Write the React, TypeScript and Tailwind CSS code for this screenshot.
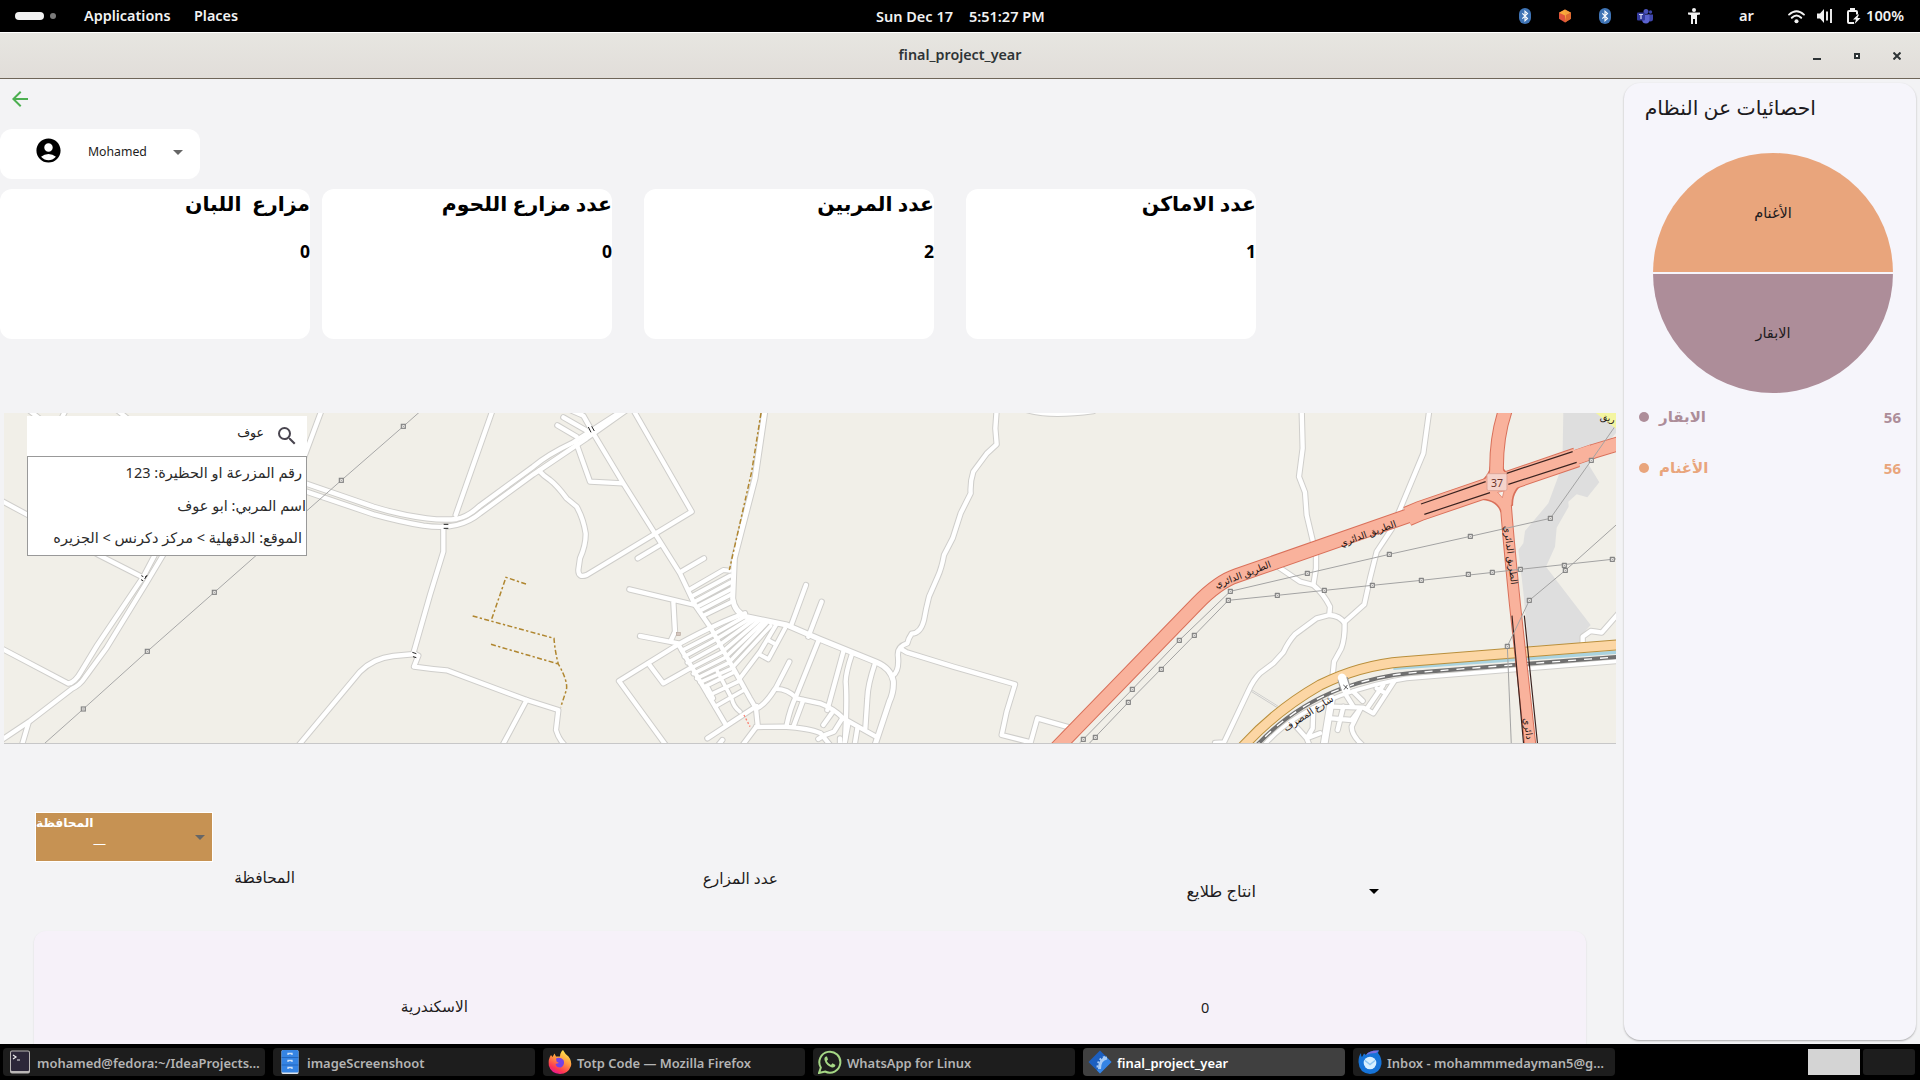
import React from "react";
import { MdAccountCircle, MdSearch, MdArrowBack, MdArrowDropDown } from "react-icons/md";

const UI = "font-['Noto_Sans','DejaVu_Sans',sans-serif]";

/* ---------- map data: every path is in thirds of a pixel, shifted by its tile's x ---------- */
type Road = { x: number; d: string; w?: number };

const roads: Road[] = [
  { x: 0, d: "M0 285L80 328L300 452L430 518" },
  { x: 0, d: "M480 420L430 515L292 720L242 802Q225 832 205 836L0 728" },
  { x: 0, d: "M510 415L440 532L320 728L255 817Q240 840 215 852L90 948L0 1008" },
  { x: 0, d: "M85 955L66 1020" },
  { x: 0, d: "M80 10L130 50M197 15L180 50M345 10L400 55" },
  { x: 0, d: "M965 15L900 190" },
  { x: 0, d: "M890 226L1120 305Q1200 330 1280 340Q1330 346 1370 342Q1405 335 1440 302L1600 185Q1640 150 1720 112L1870 15" },
  { x: 0, d: "M890 250L1120 328Q1200 350 1270 362Q1330 370 1370 360Q1410 350 1440 325L1600 208L1760 100L1880 15" },
  { x: 0, d: "M895 1022L1080 800Q1120 760 1180 753L1245 747" },
  { x: 400, d: "M130 365L130 440L90 570L40 745L55 752L42 785Q90 792 140 796L380 885L475 915L468 975Q475 1000 492 1018" },
  { x: 400, d: "M278 15L167 330" },
  { x: 400, d: "M308 1020L380 885" },
  { x: 400, d: "M700 15L875 320L560 510Q535 520 535 495L540 460Q558 420 557 385Q550 340 530 305L500 280Q470 240 450 225Q430 212 417 197" },
  { x: 400, d: "M515 17L550 32L580 85L670 235L840 505L885 600L930 665L1000 790L1050 880L1068 910L1073 960L1028 1020" },
  { x: 400, d: "M490 37L560 77M472 61L530 95" },
  { x: 400, d: "M530 118L570 230L668 235" },
  { x: 400, d: "M713 460L780 420M840 502L912 460" },
  { x: 400, d: "M1095 15L1065 220L1003 460L998 580Q1003 622 1040 635L1160 660L1260 703L1430 772Q1472 790 1480 828Q1482 860 1468 890L1425 1020", w: 15 },
  { x: 400, d: "M688 553L885 600M820 590L825 680L812 708M720 693L835 715" },
  { x: 400, d: "M1035 625Q960 650 835 718L657 828L797 1020" },
  { x: 400, d: "M745 775L790 835L870 790M835 718L975 955M1070 903L922 1000" },
  { x: 400, d: "M865 556L970 495L990 497M873 575L990 512M881 592L992 532M890 606L994 552M898 618L995 568M908 633L1000 588", w: 12 },
  { x: 400, d: "M845 737L940 688L1035 634M853 755L945 705L1050 640M862 773L955 722L1062 644M870 791L965 742L1075 648M880 806L975 758L1088 652M890 820L985 774L1098 656M900 832L995 790L1112 662", w: 11 },
  { x: 400, d: "M912 846L1005 800M925 872L1018 828M945 905L1032 855M950 795L995 880Q1000 905 1020 920M925 850L940 880", w: 11 },
  { x: 400, d: "M1018 822L1080 740L1128 660M1078 748L1105 763L1155 670M1102 704L1124 716", w: 12 },
  { x: 400, d: "M1218 540L1172 665M1265 590L1225 695M1255 708L1190 870Q1170 910 1160 960" },
  { x: 400, d: "M1168 770L1127 850M1070 910Q1095 900 1125 852Q1160 850 1190 880L1260 895Q1300 910 1330 940L1428 995" },
  { x: 400, d: "M1210 885L1180 965M1068 966L1150 965Q1230 970 1262 985L1290 1020M967 1005L955 1020" },
  { x: 800, d: "M130 740L82 915M155 750Q138 800 137 830Q142 890 134 1020M225 775Q203 840 202 880L196 970M95 925L70 960" },
  { x: 800, d: "M125 943L102 980Q75 988 55 1002M145 955L133 1020M172 970L164 1020M120 1000L120 1020" },
  { x: 800, d: "M590 15L586 70L590 118L560 146L520 200Q510 230 512 265L482 325L458 400L432 450Q425 490 412 518L387 575Q378 610 372 645Q362 685 335 686Q325 700 322 715Q290 725 294 755Q298 800 278 812" },
  { x: 800, d: "M305 733L320 742L460 785L645 838L620 920L605 990L692 1012L712 940L810 968" },
  { x: 800, d: "M680 15Q750 36 880 18" },
  { x: 1200, d: "M305 15L308 130L297 215L315 262L320 330L340 415M348 445L348 490L340 540" },
  { x: 1200, d: "M688 15L670 145L595 325M575 372L530 440L510 520L493 598L435 650" },
  { x: 1200, d: "M238 488L300 530L340 540Q370 565 390 605L388 630L350 640L285 688Q265 710 250 742L220 775L180 805Q160 825 145 858L72 1012L45 1014" },
  { x: 1200, d: "M388 630Q420 632 434 655Q435 700 424 730L402 770L398 810" },
  { x: 1200, d: "M1260 620L1205 683Q1190 680 1172 678L1148 695L1148 718" },
  { x: 1200, d: "M180 1035Q260 935 420 872Q520 835 620 820L1260 768", w: 11 },
  { x: 1200, d: "M395 880L372 1020", w: 20 },
  { x: 1200, d: "M583 828L520 925L490 908L400 905M550 840L500 912M530 850L552 862" },
  { x: 1200, d: "M435 865L460 905M460 860L488 888M482 910L455 965Q455 990 485 1018M395 940L455 945L480 912M413 975L430 905" },
  { x: 1200, d: "M340 910L338 970L320 1000L328 1020M275 950L320 1000L360 985" },
];

const pylonsA = [[250, 912], [442, 739], [643, 562], [1024, 226], [1210, 64]];
const pylonsD = [
  [91, 559], [322, 505], [568, 448], [811, 394], [1051, 340], [1174, 166], [-62, 706], [-203, 853], [-350, 1003],
  [85, 586], [232, 571], [373, 556], [517, 541], [664, 526], [805, 508], [877, 502], [961, 493], [1093, 481], [1237, 463],
  [-17, 691], [-116, 793], [-215, 892], [-314, 997], [1096, 496], [988, 586], [922, 724],
];

const tile = (x: number) => `translate(${x} 405) scale(0.33333)`;

function Pylon({ x, y }: { x: number; y: number }) {
  return (
    <g>
      <rect x={x - 6} y={y - 6} width="12" height="12" fill="#f4f2ee" stroke="#858585" strokeWidth="3.5" />
      <path d={`M${x - 3} ${y - 3}l6 6m0-6l-6 6`} stroke="#999" strokeWidth="2" />
    </g>
  );
}

function MapDrawing() {
  const ring = "M-440 1040L-10 597Q55 530 110 512L660 320";
  const ringWide = "M622 334L660 318L1130 157";
  const ringEnd = "M1100 167L1180 139L1270 112";
  const north = "M918 10Q886 100 890 215";
  const south = "M914 250Q920 350 945 600L992 1030";
  const orange = "M115 1040Q220 920 360 840Q480 780 610 770L1260 719";
  const rail = "M162 1030Q270 910 420 852Q530 812 640 803L1260 755";
  return (
    <svg className="block h-[330px] w-[1612px]" viewBox="4 413 1612 330">
      <rect x="0" y="400" width="1630" height="360" fill="#f1efe8" />
      <g transform={tile(1200)}>
        <path
          fill="#dedede"
          d="M1090 20H1260V70L1165 178L1198 232L1162 277L1130 268L1105 290L1106 305L1070 368L1065 425L1038 485L1172 660L1145 690V715L985 724L970 560L955 435L970 415L975 378L1045 295L1080 200L1088 140Z"
        />
        <path d="M155 857L232 905" stroke="#c9c9c9" strokeWidth="7" />
        <path d="M155 857L232 905" stroke="#f1efe8" strokeWidth="3" />
      </g>
      <g fill="none" strokeLinecap="round" strokeLinejoin="round">
        {roads.map((r, i) => (
          <path key={i} transform={tile(r.x)} d={r.d} stroke="#cfcecb" strokeWidth={(r.w ?? 13) + 6} />
        ))}
        {roads.map((r, i) => (
          <path key={i} transform={tile(r.x)} d={r.d} stroke="#fff" strokeWidth={r.w ?? 13} />
        ))}
      </g>
      <g transform={tile(400)} fill="none">
        <path
          d="M1083 24L1055 200L988 495M378 537L318 517L273 648M218 633L462 700Q465 740 475 777Q505 830 499 855L482 907M273 718L475 777"
          stroke="#b0862f"
          strokeWidth="4.5"
          strokeDasharray="15 7 7 7"
        />
        <path d="M1032 930L1050 965" stroke="#fa8072" strokeWidth="4" strokeDasharray="6 6" />
        <rect x="829" y="682" width="12" height="10" fill="#d4c6bf" stroke="#b9a99e" strokeWidth="2" />
        <path d="M565 66l8 16m2-18l8 14M131 358h14m-14 12h14M37 742l12 4m-10 9l10 3" stroke="#222" strokeWidth="3" />
      </g>
      <g transform={tile(0)} fill="none">
        <path d="M424 512l6 3M436 515l6-3M423 524l6 3M434 522l6-10" stroke="#222" strokeWidth="3" />
        <path d="M125 1023L250 912L442 739L643 562L1024 226L1210 64L1262 18" stroke="#a8a8a8" strokeWidth="3" />
        {pylonsA.map(([x, y]) => (
          <Pylon key={x} x={x} y={y} />
        ))}
      </g>
      <g transform={tile(1200)} fill="none" strokeLinejoin="round">
        <path d="M580 790L1260 741" stroke="#aad3df" strokeWidth="10" />
        <path d={rail} stroke="#707070" strokeWidth="12" />
        <path d={rail} stroke="#fff" strokeWidth="4" strokeDasharray="24 24" />
        <path d={orange} stroke="#b98f3c" strokeWidth="33" />
        <path d={orange} stroke="#fcd6a4" strokeWidth="27" />
        <path d="M428 820L436 850" stroke="#999" strokeWidth="32" />
        <path d="M426 818L438 854" stroke="#fff" strokeWidth="25" strokeLinecap="round" />
        <path d="M430 840l14 12m-2-12l-10 14" stroke="#444" strokeWidth="2.5" />

        <g stroke="#d9705a">
          <path d={ring} strokeWidth="45" />
          <path d={ringWide} strokeWidth="61" />
          <path d={ringEnd} strokeWidth="45" />
          <path d={north} strokeWidth="44" />
          <path d={south} strokeWidth="36" />
          <path d="M850 225Q870 205 872 185H908Q908 198 928 207L985 225Q935 250 937 300L903 320Q890 282 835 282Z" fill="#f9b29c" strokeWidth="5" />
        </g>
        <g stroke="#f9b29c">
          <path d={ring} strokeWidth="39" />
          <path d={ringWide} strokeWidth="55" />
          <path d={ringEnd} strokeWidth="39" />
          <path d="M1090 147L1170 120V164L1102 188Z" fill="#f9b29c" stroke="none" />
          <path d={north} strokeWidth="38" />
          <path d={south} strokeWidth="30" />
        </g>
        <path d="M893 262L912 258L907 278Z" fill="#f6f1ea" stroke="#d9705a" strokeWidth="2" />
        <path d="M663 297L857 230M673 328L870 263M920 205L1118 140M925 238L1130 172M936 632L972 1030M973 632L1014 1030" stroke="#3a2320" strokeWidth="3.5" />

        <path
          d="M-360 1013L-203 853L-62 706L91 559L322 505L568 448L811 394L1051 340L1174 166L1255 50M-335 1018L-215 892L-17 691L85 586L232 571L517 541L664 526L961 493L1255 461M1255 354L1096 496L988 586L922 724L934 1020"
          stroke="#a3a3a3"
          strokeWidth="3"
        />
        {pylonsD.map(([x, y]) => (
          <Pylon key={`${x}.${y}`} x={x} y={y} />
        ))}
        <rect x="861" y="206" width="60" height="51" rx="5" fill="#f5d3cb" stroke="#dfa597" strokeWidth="3" />
      </g>
      <path d="M1598 411L1616 425L1616 411Z" fill="#f4f5a0" stroke="#f4f5a0" strokeWidth="6" />
      <g className={UI} fill="#1c1412" textAnchor="middle" fontSize="9.400">
        <text x="1497" y="486.500" fontSize="10.500" fill="#6b352c">37</text>
        <text transform="translate(1244 577.500) rotate(-21)">الطريق الدائري</text>
        <text transform="translate(1369 536.500) rotate(-20)">الطريق الدائري</text>
        <text transform="translate(1507.500 555.500) rotate(83)">الطريق الدائري</text>
        <text transform="translate(1525 729) rotate(82)">دائري</text>
        <text transform="translate(1310 716) rotate(-33)">شارع المصرف</text>
        <text transform="translate(1607 421) rotate(14)">ريق</text>
      </g>
    </svg>
  );
}

/* ---------- system icons ---------- */
function BluetoothIcon() {
  return (
    <svg className="h-4 w-3" viewBox="0 0 12 16">
      <rect width="12" height="16" rx="6" fill="#3f74b5" />
      <path d="M3.300 5.300L8.500 10.500L6 12.800V3.200L8.500 5.500L3.300 10.700" fill="none" stroke="#fff" strokeWidth="1.100" />
    </svg>
  );
}

function TopBar() {
  return (
    <header className="relative flex h-8 shrink-0 items-center bg-black text-[14.67px] font-semibold text-[#f2f2f2]">
      <span className="ml-[15px] h-2 w-[29px] rounded-full bg-[#f2f2f2]" />
      <span className="ml-[6px] size-[6px] rounded-full bg-[#7b7b7b]" />
      <span className="mb-px ml-7 w-[110px] text-[14.400px] leading-[23px]">Applications</span>
      <span className="mb-px text-[14.400px] leading-[23px]">Places</span>
      <div className="absolute top-[5px] left-[876px] flex gap-4 text-[14.500px] leading-[22px] whitespace-nowrap">
        <span>Sun Dec 17</span>
        <span>5:51:27 PM</span>
      </div>
      <div className="ml-auto flex items-center">
        <BluetoothIcon />
        <svg className="ml-[28px] h-4 w-3" viewBox="0 0 13 16">
          <path d="M6.500 1L13 4.500V11L6.500 15L0 11V4.500Z" fill="#e0533c" />
          <path d="M6.500 1L13 4.500L8 7L6.500 15L6.500 1Z" fill="#f3a13a" />
          <path d="M6.500 1L0 4.500L6.500 7.500Z" fill="#f9a83a" />
          <path d="M13 4.500V11L6.500 15L8 7Z" fill="#dd6a30" />
        </svg>
        <span className="ml-[28px]"><BluetoothIcon /></span>
        <svg className="ml-[26px] h-4 w-4" viewBox="0 0 16 16">
          <circle cx="9" cy="3.500" r="2.500" fill="#4b53bc" />
          <circle cx="13.500" cy="4" r="1.700" fill="#3c43a5" />
          <path d="M11 6.500H16V11Q16 13.500 13 13.500L11 13Z" fill="#3f46ab" />
          <path d="M5 6.500H12.500V11.500Q12.500 15.500 9 15.500Q5.500 15.500 5 12Z" fill="#5b63d0" />
          <rect y="4.500" width="8" height="8" rx="1" fill="#343b9e" />
          <path d="M2 6.500H6M4 6.500V11" stroke="#d5d7f5" strokeWidth="1.200" />
        </svg>
        <svg className="ml-[33px] size-4" viewBox="0 0 16 16" fill="#f2f2f2">
          <circle cx="8" cy="2" r="2" />
          <path d="M2 4.600H14V6.400L11 7V16H9V11H7V16H5V7L2 6.400Z" />
        </svg>
        <span className="mb-px ml-[37px] w-[15px] leading-[23px]">ar</span>
        <svg className="ml-[34px] size-[17px]" viewBox="0 0 16 16" fill="none" stroke="#f2f2f2" strokeWidth="1.800">
          <path d="M1 6.200Q8 -0.300 15 6.200M3.600 9.200Q8 5 12.400 9.200" strokeLinecap="round" />
          <circle cx="8" cy="12.500" r="1.900" fill="#f2f2f2" stroke="none" />
        </svg>
        <svg className="ml-[12px] size-4" viewBox="0 0 16 16" fill="#f2f2f2">
          <path d="M0 5.500H3L7 1V15L3 10.500H0Z" />
          <path d="M10 3.500V12.500M14 1V15" stroke="#f2f2f2" strokeWidth="1.900" />
        </svg>
        <svg className="ml-[13px] h-4 w-4" viewBox="0 0 16 16" fill="none" stroke="#f2f2f2" strokeWidth="2">
          <path d="M8 15H3Q2 15 2 14V4Q2 3 3 3H10Q11 3 11 4V6.500" />
          <rect x="4" y="0" width="5" height="3" fill="#f2f2f2" stroke="none" />
          <path d="M12 6.500L7 11.500H10L8.600 16L14.500 10H11.500L13 6.500Z" fill="#f2f2f2" stroke="none" />
        </svg>
        <span className="mr-[12px] mb-px ml-[4px] w-[42px] leading-[23px]">100%</span>
      </div>
    </header>
  );
}

function TitleBar() {
  return (
    <div className="relative flex h-[47px] shrink-0 items-center justify-center border-t border-b border-t-white border-b-[#6f6559] bg-linear-to-b from-[#e7e6e1] to-[#e1ddd9] text-[14.300px] font-semibold text-[#2e3436]">
      <span className="mb-px leading-[22px]">final_project_year</span>
      <div className="absolute right-[19px] flex items-center">
        <span className="mt-[7px] mr-[33px] h-[2px] w-[8px] bg-[#2e3436]" />
        <span className="mr-[33px] size-[6px] border-2 border-[#2e3436] bg-white" />
        <svg className="size-[8px]" viewBox="0 0 8 8">
          <path d="M0.500 0.500L7.500 7.500M7.500 0.500L0.500 7.500" stroke="#2e3436" strokeWidth="2" />
        </svg>
      </div>
    </div>
  );
}

const stats = [
  { title: "مزارع  اللبان", value: "0", box: "w-[310px] mr-3" },
  { title: "عدد مزارع اللحوم", value: "0", box: "w-[290px] mr-8" },
  { title: "عدد المربين", value: "2", box: "w-[290px] mr-8" },
  { title: "عدد الاماكن", value: "1", box: "w-[290px]" },
];

function Stats() {
  return (
    <div className="mt-[10px] flex">
      {stats.map((s) => (
        <div key={s.title} dir="rtl" className={`h-[150px] rounded-xl bg-white font-bold text-black ${s.box}`}>
          <div className="h-[30px] text-[20.400px] leading-[28px] whitespace-pre">{s.title}</div>
          <div className="mt-[18px] text-[17.500px] leading-7">{s.value}</div>
        </div>
      ))}
    </div>
  );
}

function SearchBox() {
  return (
    <div className="absolute top-[3px] left-[23px] w-[280px] text-[#1d1b20]">
      <div dir="rtl" className="flex h-10 items-start bg-white pr-[8px] text-[12.500px]">
        <MdSearch className="mt-[8px] size-6 text-[#49454f]" />
        <span className="mt-[5px] mr-[11px] leading-6">عوف</span>
      </div>
      <div dir="rtl" className="flex h-[100px] flex-col border border-[#999] bg-white text-[14.500px] text-[#2a2a2a]">
        <div className="h-[32px] pr-1 leading-[31px]">رقم المزرعة او الحظيرة: 123</div>
        <div className="h-[33px] leading-[33px]">اسم المربي: ابو عوف</div>
        <div className="h-[33px] pr-1 leading-[31px]">الموقع: الدقهلية &gt; مركز دكرنس &gt; الجزيره</div>
      </div>
    </div>
  );
}

function SidePanel() {
  return (
    <aside className="mt-1 flex h-[957px] w-[292px] flex-col rounded-2xl bg-[#f6f5fb] shadow-[0_1px_2px_rgba(0,0,0,0.3)]">
      <div dir="rtl" className="mt-[9px] w-[192px] text-[20.400px] leading-[30px] text-[#1d1b20]">احصائيات عن النظام</div>
      <div className="mt-[31px] ml-[29px] flex size-[240px] flex-col overflow-hidden rounded-full text-[14.500px] text-[#1d1b20]">
        <div className="flex h-[119px] items-center justify-center bg-[#e9a57c]">الأغنام</div>
        <div className="h-[2px] bg-[#f6f5fb]" />
        <div className="flex h-[119px] items-center justify-center bg-[#ad8d99] pb-[2px]">الابقار</div>
      </div>
      <div className="mt-[10px] flex h-7 items-center pr-[15px] pl-[15px] text-[15px] font-bold text-[#ad8d99]">
        <span className="mr-[10px] size-[10px] rounded-full bg-[#ad8d99]" />
        <span className="mb-[2px]">الابقار</span>
        <span className="ml-auto">56</span>
      </div>
      <div className="mt-[23px] flex h-7 items-center pr-[15px] pl-[15px] text-[15px] font-bold text-[#e9a57c]">
        <span className="mr-[10px] size-[10px] rounded-full bg-[#e9a57c]" />
        <span className="mb-[2px]">الأغنام</span>
        <span className="ml-auto">56</span>
      </div>
    </aside>
  );
}

function Table() {
  return (
    <>
      <div className="mt-[69px] ml-[35px] flex h-[50px] w-[178px] border border-white bg-[#c69253] font-semibold text-white">
        <div className="flex w-[70px] flex-col">
          <span className="text-[12.200px] leading-5">المحافظة</span>
          <span className="ml-[57px] text-[13px] leading-5 font-normal">—</span>
        </div>
        <MdArrowDropDown className="mt-[12px] ml-auto size-6 text-[#666]" />
      </div>
      <div className="flex h-[69px] text-[15.400px] text-[#1d1b20]">
        <div dir="rtl" className="mt-[4px] w-[295px] leading-6">المحافظة</div>
        <div dir="rtl" className="mt-[5px] w-[483px] leading-6">عدد المزارع</div>
        <div dir="rtl" className="mt-[17px] w-[478px] text-[16.300px] leading-6">انتاج طلايع</div>
        <MdArrowDropDown className="mt-[17px] ml-[106px] size-6 text-black" />
      </div>
      <div className="ml-[34px] flex h-[114px] w-[1552px] rounded-t-xl bg-[#f6f1f9] pt-[64px] text-[15.400px] text-[#1d1b20] shadow-[0_1px_2px_rgba(0,0,0,0.12)]">
        <div dir="rtl" className="w-[434px] leading-6">الاسكندرية</div>
        <div className="ml-[733px] text-[14.500px] leading-6">0</div>
      </div>
    </>
  );
}

/* ---------- taskbar ---------- */
const TerminalIcon = () => (
  <svg className="size-6 shrink-0" viewBox="0 0 24 24">
    <rect x="2" y="0.500" width="20" height="23" rx="2" fill="#b9b6b5" />
    <rect x="3" y="1.500" width="18" height="19.500" rx="1" fill="#2c2739" />
    <path d="M5 5L8 7L5 9M9 10H12" fill="none" stroke="#eee" strokeWidth="1.200" />
  </svg>
);
const FilesIcon = () => (
  <svg className="size-6 shrink-0" viewBox="0 0 24 24">
    <rect x="3.500" y="0" width="17" height="24" rx="1.500" fill="#dfe3e8" />
    <rect x="3.500" y="0" width="17" height="22.500" rx="1.500" fill="#3584e4" />
    <path d="M3.500 7.500H20.500M3.500 15H20.500" stroke="#2467bd" strokeWidth="1" />
    <path d="M10 5V3.500H14V5M10 12V10.500H14V12M10 19V17.500H14V19" fill="none" stroke="#cfe0f5" strokeWidth="1.300" />
  </svg>
);
const FirefoxIcon = () => (
  <svg className="size-6 shrink-0" viewBox="0 0 24 24">
    <defs>
      <linearGradient id="ff" x1="0.800" y1="0" x2="0.300" y2="1">
        <stop offset="0" stopColor="#fff44f" />
        <stop offset="0.450" stopColor="#ff9640" />
        <stop offset="0.800" stopColor="#ff3750" />
        <stop offset="1" stopColor="#e3159b" />
      </linearGradient>
    </defs>
    <path d="M15 0Q17 4 20.500 6.500Q24 11 23 16Q20 24 12 24Q3 23.500 0.800 15.500Q0 9 3 5L4.500 7L6.500 3.500L8 6.500L12 6.500Q12 2.500 15 0Z" fill="url(#ff)" />
    <path d="M8 8.500Q12 6.500 15.500 10Q17.500 15 13 17.500Q8.500 18 7.500 14L11 13L8.500 11.500Z" fill="#7542e5" />
  </svg>
);
const WhatsAppIcon = () => (
  <svg className="size-6 shrink-0" viewBox="0 0 24 24" fill="none">
    <path d="M1 23L2.800 17.500A10.500 10.500 0 1 1 7 21.500Z" stroke="#a5d785" strokeWidth="2" />
    <path d="M8 6.500Q6 7 6.500 10Q8 15.500 14 17.500Q17 17.800 17.500 15L14.500 13.300L13 15Q10 13.800 8.800 11L10 9.500L9 6.500Z" fill="#a5d785" />
  </svg>
);
const AppIcon = () => (
  <svg className="size-6 shrink-0" viewBox="0 0 24 24">
    <path d="M12 0.500L23.500 12L12 23.500L0.500 12Z" fill="#1c5fc0" />
    <path d="M17 5.500L23.500 12L12 23.500L9 20.500Z" fill="#3584e4" />
    <path d="M19 8Q11.500 9 11.500 19" fill="none" stroke="#a6caf5" strokeWidth="3" />
    <path d="M17 7Q9.500 8.500 9.500 18" fill="none" stroke="#a6caf5" strokeWidth="2" strokeDasharray="2 2" />
  </svg>
);
const ThunderbirdIcon = () => (
  <svg className="size-6 shrink-0" viewBox="0 0 24 24">
    <path d="M8 5Q11 0 21 0.500L20 3Q24 8 23.500 14Q22 23.500 12 24Q1 23 0.500 12Q0.500 6 3 3Q3 6 4 7L6 3.500Z" fill="#1673d8" />
    <path d="M8 5Q11 0 21 0.500L18 3Q12 3 8 5Z" fill="#7a6fe0" />
    <circle cx="12" cy="13" r="6.300" fill="#d8efff" />
    <path d="M7 10.500L12 14.500L17 10.500" fill="none" stroke="#8cc6f4" strokeWidth="1.500" />
  </svg>
);

const tasks = [
  { label: "mohamed@fedora:~/IdeaProjects…", Icon: TerminalIcon, active: false },
  { label: "imageScreenshoot", Icon: FilesIcon, active: false },
  { label: "Totp Code — Mozilla Firefox", Icon: FirefoxIcon, active: false },
  { label: "WhatsApp for Linux", Icon: WhatsAppIcon, active: false },
  { label: "final_project_year", Icon: AppIcon, active: true },
  { label: "Inbox - mohammmedayman5@g…", Icon: ThunderbirdIcon, active: false },
];

function Taskbar() {
  return (
    <footer className="flex h-9 shrink-0 items-center gap-2 bg-black pl-[3px]">
      {tasks.map(({ label, Icon, active }) => (
        <div
          key={label}
          className={`flex h-7 w-[262px] items-center rounded-[4px] pl-[5px] text-[12.950px] font-semibold whitespace-nowrap ${
            active ? "bg-[#404040] text-white" : "bg-[#1d1d1d] text-[#b4b4b4]"
          }`}
        >
          <Icon />
          <span className="mt-[2px] ml-[5px] leading-5">{label}</span>
        </div>
      ))}
      <div className="mr-[5px] ml-auto flex gap-[3px]">
        <span className="h-[26px] w-[52px] bg-[#d4d4d4]" />
        <span className="h-[26px] w-[52px] rounded-[3px] bg-[#1d1d1d]" />
      </div>
    </footer>
  );
}

export default function App() {
  return (
    <div className={`flex h-[1080px] w-[1920px] flex-col overflow-hidden bg-[#f3f3f5] ${UI}`}>
      <TopBar />
      <TitleBar />
      <div className="flex h-[965px] shrink-0 overflow-hidden">
        <main className="w-[1624px] shrink-0">
          <div className="flex h-[50px] items-start pt-[8px] pl-[8px]">
            <MdArrowBack className="size-6 text-[#4caf50]" />
          </div>
          <div className="flex h-[50px] w-[200px] items-start rounded-xl bg-white text-[12.250px] text-[#1d1b20]">
            <MdAccountCircle className="mt-[7px] ml-[34px] size-[29px] text-black" />
            <span className="mt-[13px] ml-[25px] w-[60px] leading-5">Mohamed</span>
            <MdArrowDropDown className="mt-[11px] ml-[18px] size-6 text-[#666]" />
          </div>
          <Stats />
          <div className="relative mt-[74px] ml-1 w-[1612px] shadow-[0_1px_0_rgba(0,0,0,0.18)]">
            <MapDrawing />
            <SearchBox />
          </div>
          <Table />
        </main>
        <SidePanel />
      </div>
      <Taskbar />
    </div>
  );
}
